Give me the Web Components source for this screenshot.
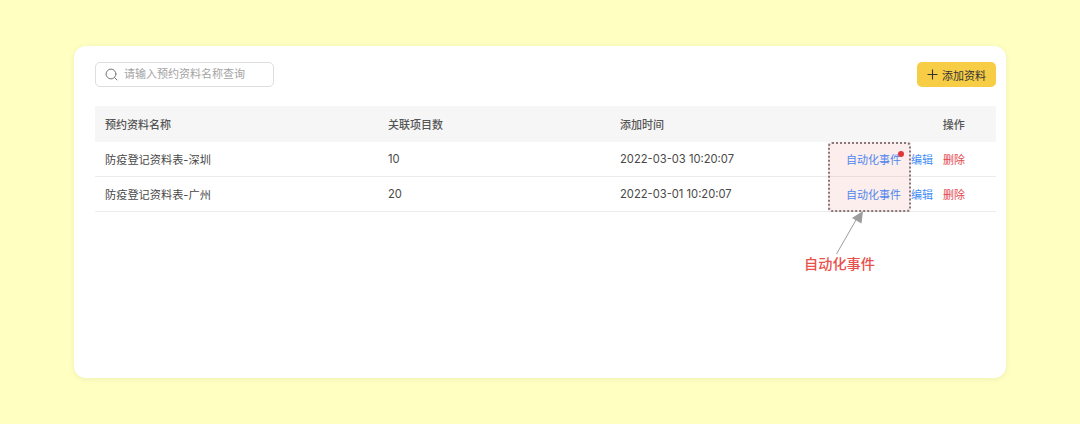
<!DOCTYPE html>
<html lang="zh">
<head>
<meta charset="utf-8">
<title>预约资料</title>
<style>
  html, body { margin: 0; height: 424px; overflow: hidden; }
  body {
    background: #ffffc2;
    padding: 46px 74px;
    box-sizing: border-box;
    font-family: "Inter", "Noto Sans CJK SC", sans-serif;
    color: #333;
  }
</style>
</head>
<body>
<doc-card>
  <search-box slot="left" placeholder="请输入预约资料名称查询"></search-box>
  <add-button slot="right">添加资料</add-button>
  <doc-table>
    <doc-row head name="预约资料名称" count="关联项目数" time="添加时间"></doc-row>
    <doc-row name="防疫登记资料表-深圳" count="10" time="2022-03-03 10:20:07" dot></doc-row>
    <doc-row name="防疫登记资料表-广州" count="20" time="2022-03-01 10:20:07"></doc-row>
    <call-out>自动化事件</call-out>
  </doc-table>
</doc-card>

<script>
class DocCard extends HTMLElement {
  constructor() {
    super()
    this.attachShadow({mode: "open"}).innerHTML = `
      <style>
        :host {
          display: block;
          height: 332px;
          box-sizing: border-box;
          padding: 16px 10px 0 21px;
          background: #fff;
          border-radius: 12px;
          box-shadow: 0 1px 6px rgba(0,0,0,.07);
        }
        .bar {
          display: flex;
          justify-content: space-between;
          margin-bottom: 19px;
        }
      </style>
      <div class="bar"><slot name="left"></slot><slot name="right"></slot></div>
      <slot></slot>
    `
  }
}

class SearchBox extends HTMLElement {
  constructor() {
    super()
    this.attachShadow({mode: "open"}).innerHTML = `
      <style>
        :host {
          display: flex;
          align-items: center;
          gap: 6px;
          width: 179px;
          height: 25px;
          box-sizing: border-box;
          padding-left: 9px;
          border: 1px solid #dedede;
          border-radius: 5px;
          background: #fff;
        }
        svg { flex: none; }
        span { font-size: 11px; color: #a3a3a3; line-height: 1; }
      </style>
      <svg width="13" height="13" viewBox="0 0 13 13" fill="none" stroke="#777" stroke-width="1" stroke-linecap="round">
        <circle cx="6" cy="6" r="4.9"/><path d="M9.6 9.6 12 12"/>
      </svg>
      <span>${this.getAttribute("placeholder")}</span>
    `
  }
}

class AddButton extends HTMLElement {
  constructor() {
    super()
    this.attachShadow({mode: "open"}).innerHTML = `
      <style>
        :host {
          display: flex;
          align-items: center;
          justify-content: center;
          gap: 4px;
          width: 79px;
          height: 25px;
          background: #f7cd46;
          border-radius: 5px;
          font-size: 11px;
          color: #333;
          cursor: pointer;
        }
      </style>
      <svg width="11" height="11" viewBox="0 0 11 11" stroke="#333" stroke-width="1.1"><path d="M5.5 .5v10M.5 5.5h10"/></svg>
      <slot></slot>
    `
  }
}

class DocTable extends HTMLElement {
  constructor() {
    super()
    this.attachShadow({mode: "open"}).innerHTML = `
      <style>
        :host { display: block; position: relative; }
      </style>
      <slot></slot>
    `
  }
}

class DocRow extends HTMLElement {
  constructor() {
    super()
    const head = this.hasAttribute("head")
    const actions = head
      ? `<span class="op">操作</span>`
      : `<a class="auto">自动化事件${this.hasAttribute("dot") ? '<i></i>' : ''}</a><a class="edit">编辑</a><a class="del">删除</a>`
    this.attachShadow({mode: "open"}).innerHTML = `
      <style>
        :host {
          display: grid;
          grid-template-columns: 283px 232px 226px 1fr;
          align-items: center;
          height: 35px;
          box-sizing: border-box;
          padding-left: 10px;
          font-size: 11px;
          color: #484848;
          white-space: nowrap;
          border-bottom: 1px solid #ececec;
        }
        :host([head]) {
          height: 36px;
          background: #f6f6f6;
          border-bottom: 0;
          font-weight: 500;
          color: #555;
        }
        :host(:not([head])) span { font-size: 11.2px; }
        .actions { display: flex; justify-content: flex-end; padding-right: 31.3px; }
        a { cursor: pointer; }
        .auto { position: relative; color: #4f86ec; z-index: 1; margin-right: 10px; }
        .auto i {
          position: absolute;
          top: -.5px;
          right: -3px;
          width: 6px;
          height: 6px;
          border-radius: 50%;
          background: #e0353d;
        }
        .edit { color: #3f8cf5; margin-right: 10px; }
        .del { color: #e5484d; }
      </style>
      <span>${this.getAttribute("name")}</span>
      <span>${this.getAttribute("count")}</span>
      <span>${this.getAttribute("time")}</span>
      <div class="actions">${actions}</div>
    `
  }
}

class CallOut extends HTMLElement {
  constructor() {
    super()
    this.attachShadow({mode: "open"}).innerHTML = `
      <style>
        :host { position: absolute; left: 733px; top: 36px; width: 83px; height: 70px; pointer-events: none; }
        .box {
          width: 100%;
          height: 100%;
          box-sizing: border-box;
          border: 2px dotted #85787a;
          border-radius: 4px;
          background: rgba(222, 70, 60, .09);
        }
        svg { position: absolute; left: 0; top: 68px; overflow: visible; }
        .label {
          position: absolute;
          left: -24px;
          top: 112px;
          font-size: 14.2px;
          line-height: 20px;
          font-weight: 500;
          color: #e8504c;
          white-space: nowrap;
        }
      </style>
      <div class="box"></div>
      <svg width="40" height="46" viewBox="0 0 40 46">
        <path d="M8.5 44 28 10" stroke="#9c9c9c" stroke-width="1" fill="none"/>
        <path d="M35 1 33.5 13.5 24 8Z" fill="#9c9c9c"/>
      </svg>
      <div class="label"><slot></slot></div>
    `
  }
}

customElements.define("doc-card", DocCard)
customElements.define("search-box", SearchBox)
customElements.define("add-button", AddButton)
customElements.define("doc-table", DocTable)
customElements.define("doc-row", DocRow)
customElements.define("call-out", CallOut)
</script>
</body>
</html>
